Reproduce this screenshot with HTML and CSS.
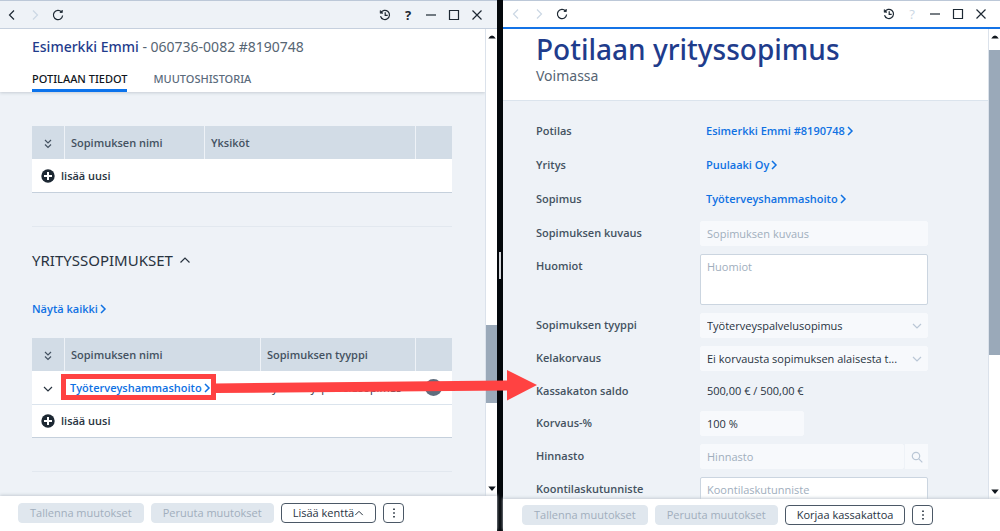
FILE: index.html
```html
<!DOCTYPE html>
<html lang="fi">
<head>
<meta charset="utf-8">
<title>Potilaan yrityssopimus</title>
<link rel="stylesheet" href="styles.css">
</head>
<body>
<svg class="defs" aria-hidden="true">
  <symbol id="left" viewBox="0 0 12 12"><path d="M8 1.500 3.500 6 8 10.500"/></symbol>
  <symbol id="right" viewBox="0 0 12 12"><path d="M4 1.500 8.500 6 4 10.500"/></symbol>
  <symbol id="next" viewBox="0 0 10 12"><path d="M3 2 7 6l-4 4"/></symbol>
  <symbol id="up" viewBox="0 0 12 12"><path d="M1.500 8.500 6 4l4.500 4.500"/></symbol>
  <symbol id="down" viewBox="0 0 12 12"><path d="M2 4 6 8l4-4"/></symbol>
  <symbol id="more" viewBox="0 0 12 12"><path d="M3 2 6 5l3-3M3 6.500l3 3 3-3"/></symbol>
  <symbol id="reload" viewBox="0 0 12 12"><path d="M9.500 3A4.600 4.600 0 1 0 10.600 6.500"/><path d="M8 3.500h2.300V1.200z" fill="currentColor" stroke-width="0.800"/></symbol>
  <symbol id="history" viewBox="0 0 12 12"><path d="M1.800 3.800A4.600 4.600 0 1 1 1.500 7.300M6.200 3.300v3h2.500"/><path d="M1.200 1.500v2.800h2.800z" fill="currentColor" stroke-width="0.600"/></symbol>
  <symbol id="min" viewBox="0 0 12 12"><path d="M1 6h10"/></symbol>
  <symbol id="max" viewBox="0 0 12 12"><path d="M1.500 1.500h9v9h-9z"/></symbol>
  <symbol id="close" viewBox="0 0 12 12"><path d="m1.500 1.500 9 9m0-9-9 9"/></symbol>
  <symbol id="plus" viewBox="0 0 14 14"><circle cx="7" cy="7" r="6.700" fill="#1d2833" stroke="none"/><path d="M7 3v8M3 7h8" stroke="#fff" stroke-width="2"/></symbol>
  <symbol id="dots" viewBox="0 0 12 12"><path d="M5 0.500h2v2H5zM5 5h2v2H5zM5 9.500h2v2H5z" fill="currentColor" stroke="none"/></symbol>
  <symbol id="search" viewBox="0 0 12 12"><circle cx="5" cy="5" r="3.700"/><path d="m7.800 7.800 3.500 3.500"/></symbol>
  <symbol id="tri-up" viewBox="0 0 8 8"><path d="M1 6q3-5 6 0z" fill="currentColor" stroke="none"/></symbol>
  <symbol id="tri-down" viewBox="0 0 8 8"><path d="M1 2h6L4 5.500z" fill="currentColor" stroke="none"/></symbol>
</svg>
<main class="app">
  <section class="pane">
    <nav class="titlebar">
      <button class="tool" aria-label="Takaisin"><svg><use href="#left"/></svg></button>
      <button class="tool" aria-label="Eteenpäin" disabled><svg><use href="#right"/></svg></button>
      <button class="tool" aria-label="Päivitä"><svg><use href="#reload"/></svg></button>
      <span class="spacer"></span>
      <button class="tool" aria-label="Historia"><svg><use href="#history"/></svg></button>
      <button class="tool help">?</button>
      <button class="tool" aria-label="Pienennä"><svg><use href="#min"/></svg></button>
      <button class="tool" aria-label="Suurenna"><svg><use href="#max"/></svg></button>
      <button class="tool" aria-label="Sulje"><svg><use href="#close"/></svg></button>
    </nav>
    <div class="body">
      <div class="view">
        <header class="patient">
          <h1 class="patient-name"><b>Esimerkki Emmi</b> - 060736-0082 #8190748</h1>
          <div class="tabs">
            <button class="tab active">POTILAAN TIEDOT</button>
            <button class="tab">MUUTOSHISTORIA</button>
          </div>
        </header>
        <div class="content">
          <table class="grid">
            <colgroup><col class="c-icon"><col class="c-unit"><col><col class="c-end"></colgroup>
            <thead><tr><th class="mid"><svg><use href="#more"/></svg></th><th>Sopimuksen nimi</th><th>Yksiköt</th><th></th></tr></thead>
            <tbody><tr><td colspan="4"><button class="add"><svg><use href="#plus"/></svg>lisää uusi</button></td></tr></tbody>
          </table>
          <hr class="rule">
          <h2 class="section-title">YRITYSSOPIMUKSET <svg><use href="#up"/></svg></h2>
          <a class="link show-all" href="#">Näytä kaikki<svg><use href="#next"/></svg></a>
          <table class="grid">
            <colgroup><col class="c-icon"><col class="c-name"><col><col class="c-end"></colgroup>
            <thead><tr><th class="mid"><svg><use href="#more"/></svg></th><th>Sopimuksen nimi</th><th>Sopimuksen tyyppi</th><th></th></tr></thead>
            <tbody>
              <tr><td class="mid"><svg><use href="#down"/></svg></td><td><a class="link" href="#">Työterveyshammashoito<svg><use href="#next"/></svg></a></td><td>Työterveyspalvelusopimus</td><td class="mid"><i class="dot"></i></td></tr>
              <tr><td colspan="4"><button class="add"><svg><use href="#plus"/></svg>lisää uusi</button></td></tr>
            </tbody>
          </table>
          <hr class="rule">
        </div>
      </div>
      <div class="scroll"><svg><use href="#tri-up"/></svg><div class="track low"><div class="thumb"></div></div><svg><use href="#tri-down"/></svg></div>
    </div>
    <footer class="actions">
      <button class="btn" disabled>Tallenna muutokset</button>
      <button class="btn" disabled>Peruuta muutokset</button>
      <button class="btn">Lisää kenttä<svg><use href="#up"/></svg></button>
      <button class="btn dots" aria-label="Lisää"><svg><use href="#dots"/></svg></button>
    </footer>
  </section>
  <div class="divider"></div>
  <section class="pane active-pane">
    <nav class="titlebar">
      <button class="tool" aria-label="Takaisin" disabled><svg><use href="#left"/></svg></button>
      <button class="tool" aria-label="Eteenpäin" disabled><svg><use href="#right"/></svg></button>
      <button class="tool" aria-label="Päivitä"><svg><use href="#reload"/></svg></button>
      <span class="spacer"></span>
      <button class="tool" aria-label="Historia"><svg><use href="#history"/></svg></button>
      <button class="tool help" disabled>?</button>
      <button class="tool" aria-label="Pienennä"><svg><use href="#min"/></svg></button>
      <button class="tool" aria-label="Suurenna"><svg><use href="#max"/></svg></button>
      <button class="tool" aria-label="Sulje"><svg><use href="#close"/></svg></button>
    </nav>
    <div class="body">
      <div class="view">
        <header class="contract">
          <h1 class="contract-title">Potilaan yrityssopimus</h1>
          <p class="status">Voimassa</p>
        </header>
        <form class="form">
          <div class="row info"><span class="label">Potilas</span><a class="link" href="#">Esimerkki Emmi #8190748<svg><use href="#next"/></svg></a></div>
          <div class="row info"><span class="label">Yritys</span><a class="link" href="#">Puulaaki Oy<svg><use href="#next"/></svg></a></div>
          <div class="row info"><span class="label">Sopimus</span><a class="link" href="#">Työterveyshammashoito<svg><use href="#next"/></svg></a></div>
          <div class="row"><label class="label" for="desc">Sopimuksen kuvaus</label><input class="field" id="desc" placeholder="Sopimuksen kuvaus" readonly></div>
          <div class="row"><label class="label" for="notes">Huomiot</label><textarea class="field open notes" id="notes" placeholder="Huomiot"></textarea></div>
          <div class="row"><label class="label" for="type">Sopimuksen tyyppi</label><div class="combo"><select class="field" id="type"><option>Työterveyspalvelusopimus</option></select><svg><use href="#down"/></svg></div></div>
          <div class="row"><label class="label" for="kela">Kelakorvaus</label><div class="combo"><select class="field" id="kela"><option>Ei korvausta sopimuksen alaisesta t...</option></select><svg><use href="#down"/></svg></div></div>
          <div class="row"><span class="label">Kassakaton saldo</span><span class="value">500,00 € / 500,00 €</span></div>
          <div class="row"><label class="label" for="pct">Korvaus-%</label><input class="field short" id="pct" value="100 %" readonly></div>
          <div class="row"><label class="label" for="price">Hinnasto</label><div class="lookup"><input class="field" id="price" placeholder="Hinnasto" readonly><button type="button" class="find" aria-label="Hae"><svg><use href="#search"/></svg></button></div></div>
          <div class="row"><label class="label" for="code">Koontilaskutunniste</label><input class="field open" id="code" placeholder="Koontilaskutunniste"></div>
        </form>
      </div>
      <div class="scroll"><svg><use href="#tri-up"/></svg><div class="track"><div class="thumb"></div></div><svg><use href="#tri-down"/></svg></div>
    </div>
    <footer class="actions">
      <button class="btn" disabled>Tallenna muutokset</button>
      <button class="btn" disabled>Peruuta muutokset</button>
      <button class="btn">Korjaa kassakattoa</button>
      <button class="btn dots" aria-label="Lisää"><svg><use href="#dots"/></svg></button>
    </footer>
  </section>
  <svg class="callout" viewBox="0 0 476 32" aria-hidden="true">
    <rect x="2.500" y="6.500" width="150" height="21" fill="none" stroke="#ff4242" stroke-width="5"/>
    <path d="M154 13.500 446 10.500V0l30 15-30 15.500V20.500L154 23z" fill="#ff4242" stroke="none"/>
  </svg>
</main>
</body>
</html>
```
FILE: styles.css
```css
* { box-sizing: border-box; }
body { margin: 0; font: 11px/16px "Open Sans", "Noto Sans", sans-serif; color: #28333f; }
button, input, select, textarea { font: inherit; color: inherit; }
button { padding: 0; border: 0; background: none; }
svg { width: 12px; height: 12px; fill: none; stroke: currentColor; stroke-width: 1.2; flex: none; }
.defs { display: none; }
.app { position: relative; display: flex; height: 100vh; overflow: hidden; }
.pane { flex: 1; min-width: 0; display: flex; flex-direction: column; background: #eef2f7; }
.divider { width: 6px; background: linear-gradient(#d5d8dc, #d5d8dc) center / 2px 27px no-repeat #04080c; }

.titlebar { display: flex; align-items: center; gap: 11px; height: 29px; padding: 0 14px 0 6px; border-top: 1px solid #bcc8d8; border-bottom: 1px solid #c6d0de; }
.active-pane .titlebar { background: #fff; border-bottom: 2px solid #1473e6; padding-left: 7px; padding-right: 13px; }
.tool { display: flex; width: 12px; height: 16px; align-items: center; justify-content: center; color: #1d2833; }
.tool:disabled { color: #cbd7e4; }
.help { font-size: 13px; font-weight: 700; }
.help:disabled { font-weight: 400; }
.spacer { flex: 1; }

.body { flex: 1; min-height: 0; display: flex; }
.view { flex: 1; min-width: 0; overflow: hidden; }
.scroll { width: 12px; display: flex; flex-direction: column; align-items: center; background: #fff; border-left: 1px solid #dbe2eb; color: #10161d; }
.scroll svg { width: 10px; height: 10px; margin: 2px 0; }
.track { flex: 1; align-self: stretch; display: flex; flex-direction: column; padding-top: 7px; }
.thumb { flex: 0 0 70%; background: #9aa9b9; }
.low .thumb { flex-basis: 18%; margin: auto 0 79px; }

.patient, .contract, .section-title { font-family: "Noto Sans", "Open Sans", sans-serif; }
.patient { position: relative; padding: 9px 32px 0; background: #fff; box-shadow: 0 1px 3px #c5ccd4; }
.patient-name { margin: 0; font-size: 14px; line-height: 18px; font-weight: 400; color: #566573; }
.patient-name b { font-weight: 500; color: #1f3c8c; }
.tabs { display: flex; gap: 26px; margin-top: 15px; }
.tab { height: 21px; padding-bottom: 4px; font-weight: 500; color: #5b6b7c; border-bottom: 3px solid transparent; }
.tab.active { color: #10161d; border-color: #0b73ec; }
.content { padding: 34px 33px 0 32px; }

.grid { width: 100%; table-layout: fixed; border-collapse: separate; border-spacing: 0; border-bottom: 1px solid #c5d0dc; background: #fff; }
.c-icon { width: 32px; }
.c-unit { width: 140px; }
.c-name { width: 196px; }
.c-end { width: 37px; }
.grid th { height: 33px; padding: 0 6px; background: #d2dce6; font-weight: 600; color: #445261; text-align: left; border-left: 1px solid #eef2f7; }
.grid th:first-child { border-left: 0; }
.grid td { height: 33px; padding: 0 6px; white-space: nowrap; }
.grid tr + tr td { border-top: 1px solid #dbe4ed; }
.grid .mid { text-align: center; padding: 0; }
.mid svg { vertical-align: middle; }
.dot { display: inline-block; vertical-align: middle; width: 17px; height: 17px; border-radius: 50%; background: #5f6d7d; }
.add { display: flex; align-items: center; gap: 6px; padding-left: 3px; font-weight: 600; }
.add svg { width: 14px; height: 14px; }
.rule { margin: 33px 0 0; border: 0; border-top: 1px solid #e2e8ef; }
.section-title { display: flex; align-items: center; gap: 6px; margin: 21px 0 0; font-size: 15px; line-height: 24px; font-weight: 400; }
.link { display: inline-flex; align-items: center; color: #0f71e3; font-weight: 600; text-decoration: none; }
.link svg { width: 10px; stroke-width: 1.5; }
.show-all { display: flex; margin: 29px 0 21px; }

.actions { position: relative; display: flex; gap: 7px; align-items: flex-start; height: 35px; padding: 7px 18px 0; background: #fff; box-shadow: 0 -1px 3px #c5ccd4; }
.active-pane .actions { height: 32px; padding: 6px 19px 0; }
.btn { display: flex; align-items: center; justify-content: center; height: 20px; padding: 0 11px; border: 1px solid #4b5866; border-radius: 4px; white-space: nowrap; }
.btn:disabled { background: #e0e7ee; border-color: #e0e7ee; color: #a0aebd; }
.btn svg { width: 10px; height: 10px; }
.btn.dots { width: 21px; padding: 0; }

.contract { height: 72px; padding: 2px 33px 0; background: #fff; border-bottom: 1px solid #dbe4ed; }
.contract-title { margin: 0; font-size: 28px; line-height: 36px; font-weight: 500; color: #1f3c8c; white-space: nowrap; }
.status { margin: 0; font-size: 14px; line-height: 18px; color: #566573; }
.form { display: flex; flex-direction: column; gap: 8px; padding: 18px 60px 0 33px; }
.row { display: grid; grid-template-columns: 163px 1fr; gap: 1px; min-height: 24px; align-items: start; }
.row.info { min-height: 26px; }
.label { padding-top: 4px; font-weight: 600; color: #445261; }
.row .link { justify-self: start; padding: 4px 0 0 6px; }
.value { padding: 4px 7px; }
.field { display: block; width: 100%; height: 25px; margin: 0; padding: 0 6px; border: 1px solid #f7f9fc; border-radius: 2px; background: #f7f9fc; appearance: none; outline: 0; }
.field::placeholder { color: #a0aebd; opacity: 1; }
.open { background: #fff; border-color: #cbd5e0; }
.notes { height: 51px; padding-top: 4px; resize: none; }
.short { width: 104px; }
.combo { display: grid; align-items: center; }
.combo > * { grid-area: 1 / 1; }
.combo svg { justify-self: end; margin-right: 5px; color: #bac7d6; pointer-events: none; }
.lookup { display: flex; }
.find { display: flex; flex: none; width: 24px; align-items: center; justify-content: center; background: #f7f9fc; border-left: 1px solid #eef2f7; color: #bac7d6; }
.callout { position: absolute; left: 61px; top: 370px; width: 476px; height: 32px; pointer-events: none; }
```
